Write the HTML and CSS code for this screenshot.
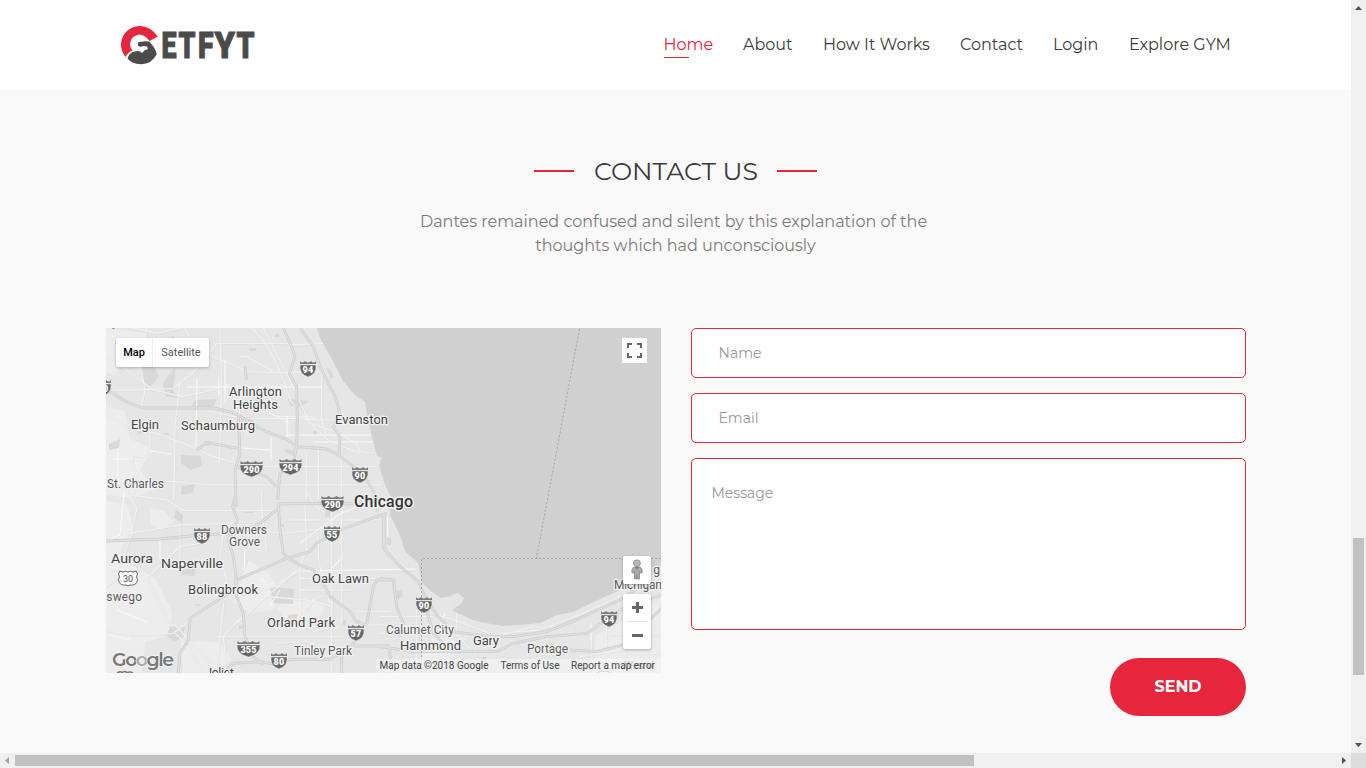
FILE: index.html
```html
<!DOCTYPE html>
<html lang="en">
<head>
<meta charset="utf-8">
<title>GetFyt - Contact</title>
<link rel="stylesheet" href="styles.css">
</head>
<body>
<div class="window">
<div class="page">
  <header class="header">
    <a class="logo" href="#"><svg width="136" height="42" viewBox="120 24 136 42" role="img" aria-label="GETFYT">
      <path d="M125.500 57Q121 51 121 44.500A18.700 18.700 0 0 1 139.500 26Q151 26.500 157.800 36.500L149.500 41Q145 34.500 139 34.500Q130.500 36 130 44Q130 48 132.500 50.500Q128 52 125.500 57Z" fill="#e6263d"/>
      <path d="M127.500 58.500Q129 53 134 51.800Q139 49.500 142 53Q144 50 148 49L147 46.500 143 46Q141 47.500 138 46L138 42.200 145 41.300 149 41.500Q155 47 156.800 54Q152 64 141 64.300Q132 64 127.500 58.500Z" fill="#4b4b4c"/>
      <g class="wordmark"><text x="161.500" y="58" textLength="15" lengthAdjust="spacingAndGlyphs">E</text><text x="178.500" y="58" textLength="17" lengthAdjust="spacingAndGlyphs">T</text><text x="198" y="58" textLength="15.500" lengthAdjust="spacingAndGlyphs">F</text><text x="214.500" y="58" textLength="20.500" lengthAdjust="spacingAndGlyphs">Y</text><text x="236.500" y="58" textLength="18" lengthAdjust="spacingAndGlyphs">T</text></g>
    </svg></a>
    <nav class="nav">
      <a class="nav-link active" href="#">Home</a>
      <a class="nav-link about" href="#">About</a>
      <a class="nav-link how" href="#">How It Works</a>
      <a class="nav-link contact" href="#">Contact</a>
      <a class="nav-link login" href="#">Login</a>
      <a class="nav-link explore" href="#">Explore GYM</a>
    </nav>
  </header>
  <main class="section">
    <h2 class="title"><span>CONTACT US</span></h2>
    <p class="lead">Dantes remained confused and silent by this explanation of the<br><span class="lead-end">thoughts which had unconsciously</span></p>
    <div class="columns">
      <div class="map">
        <svg class="map-canvas" width="555" height="345" viewBox="106 328 555 345">
          <defs>
            <g id="shield"><path d="M-8-8Q-6-5-3-8Q0-5 3-8Q6-5 8-8V-5H-8Z" fill="#7b7b7b"/><path d="M-8-4H8Q9 5 0 8Q-9 5-8-4Z" fill="#666" stroke="#eee" stroke-width=".5"/></g>
            <g id="shield-wide"><path d="M-11-8Q-8-5-4-8Q0-5 4-8Q8-5 11-8V-5H-11Z" fill="#7b7b7b"/><path d="M-11.500-4H11.500Q12 5 0 8Q-12 5-11.500-4Z" fill="#666" stroke="#eee" stroke-width=".5"/></g>
            <g id="roads" fill="none" stroke-linejoin="round">
              <g transform="translate(100 320) scale(.33333)">
                <path d="M0 195L70 240 110 258 130 264H340L400 278 440 300 500 335 560 358 590 380 680 387 715 405 760 440 790 460 820 515 832 545V575"/>
                <path d="M600 24L640 80 660 140 690 200 710 240 720 290 700 320 720 350 717 405"/>
                <path d="M550 24L575 80 585 110 568 160 590 200 592 300 590 380 580 430 540 460 533 540"/>
                <path d="M415 290L420 400 405 450 408 560M410 440L500 470 530 500"/>
                <path d="M290 390L320 368 415 385M555 390L580 400 590 380M435 140L440 180"/>
              </g>
              <g transform="translate(100 490) scale(.33333)">
                <path d="M18 153L180 147 300 135 420 128 480 100 535 55V42L620 40 830 42"/>
                <path d="M405 20L398 50 412 90 385 150 400 200 408 260 410 320 430 370 435 440 460 500 490 525"/>
                <path d="M535 40L540 120 550 190 565 205 600 225 640 240 670 280 690 320 750 365 770 395 800 405"/>
                <path d="M235 550L240 490 265 450 270 385 400 300 410 270 560 205 630 185 650 160 720 120 830 80 860 70"/>
                <path d="M370 549L400 520 480 515 540 525 570 508H690L760 468H870"/>
                <path d="M765 455L725 500V549M800 405L820 290 830 270H870M850 75V170L870 200"/>
              </g>
              <g transform="translate(380 490) scale(.33333)">
                <path d="M12 75L15 180 60 230 115 275 135 320 175 380 220 425 330 440 400 440 500 425 600 385 720 330 780 290"/>
                <path d="M0 470L100 485H350L400 460 500 440 620 430 730 355 843 315M28 470L35 549M0 265L40 270 50 350 70 400 60 440M140 360L160 430 220 490M570 480L650 485 730 465 850 350"/>
              </g>
            </g>
          </defs>
          <rect x="106" y="328" width="555" height="345" fill="#e6e6e6"/>
          <g fill="#ededed">
            <path d="M106 328L145 333 151 355 140 370 123 360 116 375 106 372ZM106 407L124 410 130 439 152 448 140 470 155 489 135 498 106 495ZM106 500L128 505 133 527 120 552 133 566 155 578 172 612 170 635 145 642 142 673 106 673Z"/>
            <path d="M150 508L164 511 174 522 160 530 151 525ZM249 560L270 575 283 597 272 610 251 613 233 602ZM181 641L218 642 232 659 215 673 183 673ZM275 605L296 598 325 605 320 617 288 622ZM433 636L453 640 447 665 418 660ZM596 636L661 598V673H591Z"/>
          </g>
          <g fill="#d8d8d8">
            <path d="M141 367L154 365 159 377 150 387 143 383ZM170 373L176 367 173 391 180 398 166 397 163 384ZM195 400L217 399 213 407 190 408ZM176 510L183 515 182 523 174 518ZM181 455L201 456 202 466 190 470 181 463ZM182 486L195 484 193 493 181 495ZM270 587L294 589 293 604 273 603ZM181 570L197 567 194 576 182 575ZM170 627L185 627 183 638 174 642 167 635ZM109 444L120 439 119 448 109 450ZM288 399L309 401 301 407 290 406ZM237 417L251 417 260 429 246 431 236 426ZM289 615L298 614 295 622 286 621ZM326 368l4 1 4 8-3 2Z"/>
            <path d="M171 336h3v2h-3zM188 349h5v4h-5zM249 348h7v3h-7zM275 334h4v3h-4zM138 431h4v3h-4zM164 433h5v2h-5zM205 441h4v5h-4zM245 511h9v2h-9zM280 524h4v3h-4zM313 431h4v4h-4zM325 511h5v6h-5zM239 626h5v3h-5zM195 604h5v2h-5zM343 620h3v5h-3zM396 591l6-2 1 7-5 4zM399 630h6v3h-6zM482 657h4v3h-4zM516 662h5v2h-5zM559 653h6v2h-6zM387 538h4v7h-4z"/>
          </g>
          <g class="local" transform="translate(100 320) scale(.33333)">
            <path d="M100 24L170 40 240 25M18 110L80 150 160 210 245 230 320 215 400 190M140 24L120 130 135 210 125 260M255 24L290 90 390 130 440 155 540 158 665 155M18 210H110L220 205 240 190 300 140 350 70H550L600 75 670 70M455 24L490 60 520 110 555 190 570 240 650 330 690 365 780 400M490 24L560 160 630 310 720 340M240 190L235 230 225 320 222 540M150 300V380L130 410 100 405 95 430 110 460 100 520M18 285L100 320 180 345 250 370 340 410 410 430M18 500L100 480 220 485 330 495H845M360 24L365 180 358 430M415 110L440 110 520 155M420 260L520 285 570 310 570 380M415 210L420 300M325 275L430 295H650M410 440H830M450 240L530 290 640 290M610 300H720M665 150V300L680 350M620 400V540M655 390V540M724 410V540M720 345L770 370 780 395 820 400"/>
          </g>
          <g class="local" transform="translate(100 490) scale(.33333)">
            <path d="M80 0L110 55 95 130 70 200 85 240 18 290M90 15L200 30 250 62H530M90 130L240 105 400 100M140 265L170 320 205 405H225L330 520M140 265L240 170 300 160M240 100V220M18 420L100 435 220 430 300 370M225 430L260 460 310 549M370 130L360 200 380 270 370 350 360 440 350 540M410 320L480 300 520 290 600 240M410 400L500 320 590 240M420 385L370 440 380 549M485 0V60L500 180M430 120L560 130 720 110M615 40L620 180 600 230 603 400M620 360L640 330 670 315 M655 130V210L690 340M695 60V550M725 70V400M570 90H840M600 265H830M600 300H750M350 440H730M500 320L620 330 700 350M560 410H700M530 460L620 455 760 490M770 365H870M760 405H870M620 0L640 40 660 60"/>
          </g>
          <g class="local" transform="translate(380 490) scale(.33333)">
            <path d="M0 240H90M0 380H160M0 430H210L260 450M110 360V549M160 370L250 400 330 430M230 370V430L290 500M350 440L450 412 550 410M360 430L480 420 610 370 740 310M390 450L440 470 530 435M480 480V549M635 440V549M680 400V500M735 430V549M690 435H843M725 490H843M600 500L730 480M790 300L843 350"/>
          </g>
          <g class="bright">
            <path d="M186 387H321M225 360V403M219 377V395M197 378L196 446M287 416V437M271 437V460M286 435H371M313 442H374M241 448L270 450M118 449V480M113 459H129M150 451L172 454M124 492L120 535 107 540M160 540L160 560M245 549L244 570M260 578L266 582M303 571L416 569M341 559L331 569M300 543L320 528 338 515 365 503M387.500 517V537M107 566L132 572M117 610L147 622M110 635L130 640M118 650L120 663M280 590L270 606M445 613L440 625M453 640V660M591 623V640M623 595V615M596 660H620"/>
          </g>
          <use href="#roads" class="casing"/>
          <use href="#roads" class="core"/>
          <path d="M317 328L320 338 333 361 343 381 355 395 365 402 368 420 373 441 377 456 382 458 379 465 385 485 390 495 390 515 400 535 405 551 418 563 422 583 432 592 441 598 450 596 455 602 453 611 462 615 470 619 480 622 503 626 520 625 540 623 557 615 573 612 598 600 620 590 640 579 661 573V328Z" fill="#d0d0d0"/>
          <path d="M450 597L453 594 458 593 464 598 461 604 454 609Z" fill="#e5e5e5"/>
          <path d="M579.500 329L536.500 558M661 558.500H421.500V671" class="border-line"/>

          <g class="label">
            <text x="229" y="395.500" textLength="53">Arlington</text><text x="233" y="408.500" textLength="45">Heights</text>
            <text x="131" y="429" textLength="28">Elgin</text><text x="181" y="430" textLength="74">Schaumburg</text><text x="335" y="424" textLength="53">Evanston</text>
            <text x="111" y="563" textLength="42" lengthAdjust="spacingAndGlyphs">Aurora</text><text x="161" y="568" textLength="62" lengthAdjust="spacingAndGlyphs">Naperville</text><text x="188" y="594" textLength="70">Bolingbrook</text>
            <text x="312" y="583" textLength="57">Oak Lawn</text><text x="267" y="627" textLength="68">Orland Park</text><text x="400" y="650" textLength="61">Hammond</text><text x="473" y="645" textLength="26">Gary</text>
            <text x="205" y="677" textLength="29">Joliet</text>
          </g>
          <g class="label small">
            <text x="107" y="487.500" textLength="57">St. Charles</text><text x="221" y="533.500" textLength="46">Downers</text><text x="229" y="545.500" textLength="31">Grove</text><text x="98" y="600.500" textLength="44">Oswego</text>
            <text x="294" y="654.500" textLength="58">Tinley Park</text><text x="386" y="633.500" textLength="68">Calumet City</text><text x="527" y="652.500" textLength="41">Portage</text><text x="629" y="574" textLength="31">Long</text><text x="614" y="588.500" textLength="48">Michigan</text>
          </g>
          <text x="354" y="507" textLength="59" class="city">Chicago</text>
          <g class="route">
            <use href="#shield" x="308" y="369"/><text x="308" y="373">94</text>
            <use href="#shield" x="360" y="475"/><text x="360" y="479">90</text>
            <use href="#shield" x="202" y="536"/><text x="202" y="540">88</text>
            <use href="#shield" x="332" y="534"/><text x="332" y="538">55</text>
            <use href="#shield" x="424" y="605"/><text x="424" y="609">90</text>
            <use href="#shield" x="609" y="619"/><text x="609" y="623">94</text>
            <use href="#shield" x="356" y="633"/><text x="356" y="637">57</text>
            <use href="#shield" x="279" y="661"/><text x="279" y="665">80</text>
            <use href="#shield" x="103" y="388"/><text x="103" y="392">90</text>
            <use href="#shield-wide" x="251.500" y="469"/><text x="251.500" y="473">290</text>
            <use href="#shield-wide" x="290.500" y="467"/><text x="290.500" y="471">294</text>
            <use href="#shield-wide" x="332.500" y="504"/><text x="332.500" y="508">290</text>
            <use href="#shield-wide" x="248.500" y="649"/><text x="248.500" y="653">355</text>
          </g>
          <path d="M120 571l3 1q2-1.500 5 0q3-1.500 5 0l3-1 1.500 3q-2 3 0 5.500q-.5 5-5 5.500h-2.500l-2 1-2-1h-2.500q-4.500-.5-5-5.500q2-2.500 0-5.500Z" fill="#fff" stroke="#666"/>
          <text x="123" y="582" class="us-route">30</text>
          <path d="M117 673q3-2 5-.5q3-2 5 0q4-1 6 .5" fill="none" stroke="#777" stroke-width="1.500"/>
          <path d="M112 328h3l-2 1.500Z" fill="#888"/>
          <ellipse cx="604" cy="675" rx="8" ry="4" fill="#f8f8f8" stroke="#999"/>
          <text x="112" y="666" textLength="62" class="google"><tspan>Go</tspan><tspan fill="#aaa">o</tspan><tspan>gle</tspan></text>
          <rect x="376" y="659" width="285" height="14" fill="#f5f5f5" opacity=".65"/>
          <text x="624" y="669" class="faint">Wesrvi</text>
          <g class="legal"><text x="379.500" y="669" textLength="109">Map data ©2018 Google</text><text x="500.500" y="669" textLength="59">Terms of Use</text><text x="571" y="669" textLength="84">Report a map error</text></g>
        </svg>
        <div class="map-type"><button class="type selected">Map</button><button class="type">Satellite</button></div>
        <button class="fullscreen" aria-label="Fullscreen"><svg width="15" height="15"><path d="M1 5V1H5M10 1H14V5M14 10V14H10M5 14H1V10" fill="none" stroke="#666" stroke-width="2"/></svg></button>
        <button class="pegman" aria-label="Street View"><svg width="14" height="22" viewBox="0 0 14 22"><path d="M4.500 8Q2 8 1.700 13L3 14.500 4.500 12V20H6.500V16H7.500V20H9.500V12L11 14.500 12.300 13Q12 8 9.500 8Z" fill="#aaa" stroke="#888" stroke-width=".8"/><circle cx="7" cy="4.300" r="3.400" fill="#b8b8b8" stroke="#888" stroke-width=".8"/><path d="M5 8H9L7 10.500Z" fill="#777"/></svg></button>
        <div class="zoom"><button aria-label="Zoom in"><svg width="11" height="11"><path d="M5.500 0V11M0 5.500H11" stroke="#666" stroke-width="3"/></svg></button><button aria-label="Zoom out"><svg width="11" height="11"><path d="M0 5.500H11" stroke="#666" stroke-width="3"/></svg></button></div>
      </div>
      <form class="form">
        <input class="field name" placeholder="Name">
        <input class="field email" placeholder="Email">
        <textarea class="field message" placeholder="Message"></textarea>
        <button class="send" type="button">SEND</button>
      </form>
    </div>
  </main>
</div>
<div class="vbar"><svg width="15" height="15"><path d="M4 10H11L7.500 6Z" fill="#505050"/></svg><div class="vthumb"></div><svg class="end" width="15" height="15"><path d="M4 5H11L7.500 9Z" fill="#505050"/></svg></div>
<div class="hbar"><svg width="15" height="15"><path d="M9 4V11L5 7.500Z" fill="#a0a0a0"/></svg><div class="hthumb"></div><svg class="end" width="15" height="15"><path d="M6 4V11L10 7.500Z" fill="#505050"/></svg></div>
<div class="corner"></div>
</div>
</body>
</html>
```
FILE: styles.css
```css
* { box-sizing: border-box; }
body { margin: 0; overflow: hidden; font-family: Montserrat, Inter, sans-serif; }
button { border: 0; padding: 0; background: #fff; font-family: inherit; }
.window { display: grid; grid-template: 753px 15px / 1351px 15px; width: 1366px; height: 768px; }
.page { background: #f9f9f9; overflow: hidden; }
.header { display: flex; justify-content: space-between; height: 90px; padding: 24px 120px; background: #fff; }
.logo { display: block; height: 42px; }
.logo svg { display: block; }
.wordmark { font: 900 36px Roboto, sans-serif; fill: #4b4b4c; stroke: #4b4b4c; stroke-width: 1; }
.nav { display: flex; gap: 30px; padding-top: 9px; }
.nav-link { color: #3a3a3b; font-size: 16px; line-height: 24px; white-space: nowrap; text-decoration: none; width: 50px; }
.active { position: relative; color: #e6263d; width: 49.500px; }
.active::after { content: ""; position: absolute; left: 0; top: 24px; width: 25px; height: 1px; background: #e6263d; }
.how { width: 107px; }
.contact { width: 63px; }
.login { width: 46px; }
.explore { width: 102px; }
.section { padding-top: 63px; }
.title { display: flex; align-items: center; justify-content: center; gap: 20px; margin: 0; height: 36px; color: #3a3a3b; font-size: 25.200px; font-weight: 400; }
.title::before, .title::after { content: ""; width: 40px; height: 2px; background: #e6263d; }
.title span { width: 163px; white-space: nowrap; }
.lead { margin: 21px 0 0; padding-right: 4px; text-align: center; color: #7f7b7b; font-size: 16px; font-weight: 400; line-height: 24px; }
.lead-end { padding-left: 4px; }
.columns { display: grid; grid-template-columns: 555px 555px; gap: 30px; padding: 70px 0 0 106px; }
.map { position: relative; height: 345px; overflow: hidden; }
.map-canvas { display: block; font-family: Roboto, sans-serif; }
.local path { fill: none; stroke: #f0f0f0; stroke-width: 4; filter: drop-shadow(1px 1px 0 #d8d8d8); }
.bright path { fill: none; stroke: #fafafa; stroke-width: 1; }
.casing { stroke: #cdcdcd; stroke-width: 8.500; }
.core { stroke: #e0e0e0; stroke-width: 4; }
.border-line { fill: none; stroke: #a5a5a5; stroke-width: 1; stroke-dasharray: 2 2; }
.label { fill: #444; font-size: 13px; stroke: #f1f1f1; stroke-width: 2.5px; paint-order: stroke; }
.small { font-size: 12px; fill: #5a5a5a; }
.city { fill: #333; font-size: 16px; font-weight: 500; stroke: #eee; stroke-width: 3px; paint-order: stroke; }
.route text { fill: #fff; font-size: 9px; font-weight: 900; text-anchor: middle; letter-spacing: .2px; }
.us-route { font-size: 9px; fill: #444; }
.google { font: 600 19px Montserrat, sans-serif; fill: #777; stroke: #f5f5f5; stroke-width: 1.5px; paint-order: stroke; }
.faint { font-size: 10px; fill: #bbb; }
.legal { font-size: 10px; fill: #444; }
.map-type { position: absolute; left: 10px; top: 10px; display: flex; width: 93px; height: 29px; background: #fff; border-radius: 2px; box-shadow: 0 1px 3px #0004; }
.type { width: 56px; background: none; color: #565656; font: 11px Roboto, sans-serif; }
.selected { width: 37px; color: #000; font-weight: 500; border-right: 1px solid #eee; }
.fullscreen { position: absolute; right: 14px; top: 10px; display: grid; place-items: center; width: 25px; height: 25px; }
.pegman, .zoom { position: absolute; right: 10px; width: 28px; border-radius: 2px; background: #fff; box-shadow: 0 1px 3px #0004; }
.pegman { top: 228px; display: grid; place-items: center; height: 28px; }
.zoom { top: 266px; height: 55px; padding: 0 4px; }
.zoom button { display: grid; place-items: center; width: 20px; height: 27px; }
.zoom button + button { height: 28px; border-top: 1px solid #e2e2e2; }
.form { display: flex; flex-direction: column; gap: 15px; }
.field { height: 50px; margin: 0; padding: 0 26.500px; border: 1px solid #e6263d; border-radius: 5px; outline: 0; background: #fff; color: #555; font: 400 14px Montserrat, Inter, sans-serif; }
.field::placeholder { color: #999; opacity: 1; }
.message { height: 172px; padding: 25px 19.500px; resize: none; }
.send { align-self: flex-end; width: 136px; height: 58px; margin-top: 13px; padding-bottom: 2px; border-radius: 29px; background: #e6263d; color: #fff; font-size: 16px; font-weight: 700; }
.vbar { display: flex; flex-direction: column; background: #f0f0f0; }
.vthumb { width: 11px; height: 137px; margin: 523px 0 0 2px; background: #c1c1c1; }
.hbar { display: flex; background: #f0f0f0; }
.hthumb { width: 959px; height: 11px; margin-top: 2px; background: #c1c1c1; }
.vbar .end { margin-top: auto; }
.hbar .end { margin-left: auto; }
.corner { background: #dcdcdc; }
```
